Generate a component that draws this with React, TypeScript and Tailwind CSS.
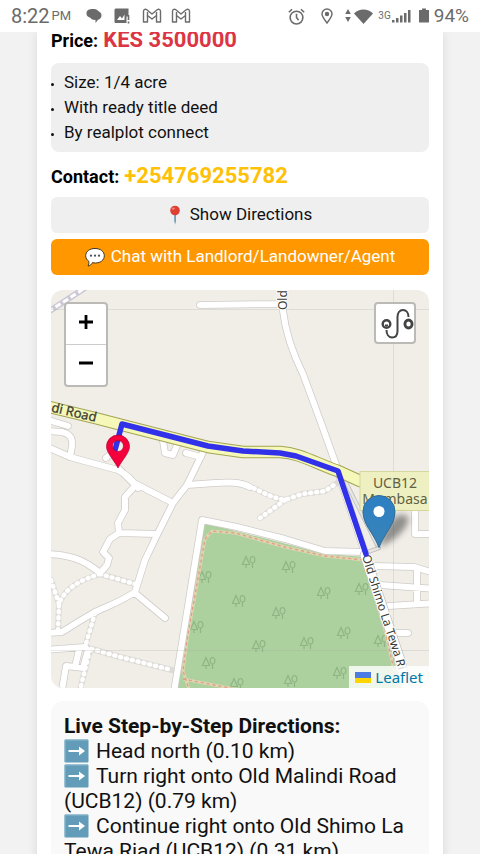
import type { ReactNode } from 'react';

function Mail() {
  return (
    <svg className="h-4 w-5" viewBox="0 0 20 16" fill="none" stroke="#6b6b6b" strokeWidth="1.4" strokeLinejoin="round">
      <path d="M1.500 14V3.200C1.500 1 3.600.8 4.800 1.800L10 6l5.200-4.200C16.400.8 18.500 1 18.500 3.200V14h-4V7.500L10 11 5.500 7.500V14z" />
      <path d="M5.500 7.500V4M14.500 7.500V4" />
    </svg>
  );
}

function StatusBar() {
  return (
    <header className="flex h-8 shrink-0 items-center justify-between bg-white px-[11px] text-[#6b6b6b]">
      <div className="flex items-center">
        <span className="text-[20px] leading-8">8:22</span>
        <span className="ml-[2px] text-[13px] leading-8">PM</span>
        <svg className="ml-[15px] h-4 w-4" viewBox="0 0 16 16" fill="#6b6b6b">
          <path d="M7 1c4 0 6 2 6 4.800C13 9 10 10 7.500 10 4 10 .5 9 .5 5.500S3 1 7 1z" />
          <path d="M9 3c4-.5 6.500 1.200 6.500 4.300 0 2.500-1.600 4-3.500 4.500L9.500 15v-3C6 12 4 10.500 4 8z" />
        </svg>
        <svg className="ml-3 h-4 w-4" viewBox="0 0 16 16">
          <path d="M1.500.5h13v8h-2v6.500h-11A1 1 0 0 1 .5 14V1.500z" fill="#6b6b6b" />
          <path d="M3 12l3-4 2 2.500 2.500-4V12z" fill="#fff" />
          <path d="M14.500 7v5M14.500 13.500v2" stroke="#6b6b6b" strokeWidth="1.600" />
        </svg>
        <span className="ml-3 flex gap-[9px]">
          <Mail />
          <Mail />
        </span>
      </div>
      <div className="flex items-center">
        <svg className="h-[17px] w-[17px]" viewBox="0 0 16 16" fill="none" stroke="#6b6b6b" strokeWidth="1.500">
          <circle cx="8" cy="9" r="6" />
          <path d="M8 5.500V9l2 2.500M.8 4l3-2.800M15.200 4l-3-2.800" />
        </svg>
        <svg className="ml-4 h-4 w-3" viewBox="0 0 12 16" fill="none" stroke="#6b6b6b" strokeWidth="1.400">
          <path d="M6 15C3 11 1 8.500 1 6a5 5 0 0 1 10 0c0 2.500-2 5-5 9z" />
          <circle cx="6" cy="6" r="1.500" fill="#6b6b6b" />
        </svg>
        <svg className="ml-3 h-4 w-7" viewBox="0 0 28 16" fill="#6b6b6b">
          <path d="M3 1l2.800 5H.2zM3 14L.2 9h5.600z" />
          <path d="M9 5.500c5-5.300 14-5.300 19 0L18.500 16z" />
        </svg>
        <span className="ml-[5px] text-[10px] leading-4">3G</span>
        <svg className="h-4 w-5" viewBox="0 0 20 16" fill="#6b6b6b">
          <path d="M1 12h2.500v2.500H1zM5 10h2.500v4.500H5zM9 7.500h2.500v7H9zM13 5h2.500v9.500H13zM17 2h2.500v12.500H17z" />
        </svg>
        <svg className="ml-2 h-4 w-[10px]" viewBox="0 0 10 16" fill="#6b6b6b">
          <path d="M3 .5h4v1.500h3v12.500H0V2h3z" />
        </svg>
        <span className="ml-[5px] text-[19px] leading-8">94%</span>
      </div>
    </header>
  );
}

function PushPin() {
  return (
    <svg className="h-5 w-[14px]" viewBox="0 0 14 20" aria-hidden="true">
      <path d="M6.200 9h1.800v7l-.9 3.500-.9-3.500z" fill="#6f9db5" />
      <circle cx="7" cy="5.500" r="4.800" fill="#dd3f34" />
      <ellipse cx="5.300" cy="3.600" rx="1.600" ry="1.200" fill="#f58073" />
    </svg>
  );
}

function SpeechBalloon() {
  return (
    <svg className="h-5 w-5" viewBox="0 0 20 20" aria-hidden="true">
      <path d="M10 1.500c5.500 0 9.300 3 9.300 7.300S15.500 16 10.500 16c-1 0-2-.1-3-.4C6.500 17.500 5 18.800 3 19c.9-1.300 1-3 .8-4.700C1.900 13 .7 11 .7 8.800.7 4.500 4.500 1.500 10 1.500z" fill="#fff" stroke="#3d3427" strokeWidth="1" />
      <g fill="#43505c">
        <circle cx="6" cy="8.700" r="1.100" />
        <circle cx="10" cy="8.700" r="1.100" />
        <circle cx="14" cy="8.700" r="1.100" />
      </g>
    </svg>
  );
}

function StepArrow() {
  return (
    <svg className="mr-[7px] inline-block h-6 w-[25px] align-[-5px]" viewBox="0 0 25 24" aria-hidden="true">
      <rect x=".5" y=".5" width="24" height="23" rx="1" fill="#629cb8" />
      <path d="M1 23V1h23" fill="none" stroke="#8dbace" />
      <path d="M4.500 12H17" stroke="#fff" strokeWidth="2" />
      <path d="M15 7.500l6 4.500-6 4.500z" fill="#fff" />
    </svg>
  );
}

const lanes = [
  'M200 305L283 304',
  'M284 286L283 311C286 335 296 360 303 374L320 420L338 470',
  'M45 419L68 426',
  'M45 431L62 432C70 434 73 438 72 446L70 457',
  'M45 446L70 457L88 462L118 470C128 475 133 481 138 488',
  'M118 468L132 482L173 503',
  'M113 452L106 458',
  'M163 441L165 453L173 455L178 443',
  'M186 453L201 457',
  'M205 448L187 485L173 503L157 535L145 560L135 592C120 602 108 606 95 612L78 622L62 632L45 633',
  'M187 485L215 483C230 482 240 482 250 487',
  'M133 488L125 497L125 510L118 523L119 533L157 534',
  'M119 533L110 539L103 552L109 558L107 565L100 573',
  'M45 554C70 554 84 560 100 573',
  'M135 593L165 618',
  'M45 650L85 647',
  'M79 650L75 667M62 690L66 666L84 668M88 650L83 668',
  'M174 692L202 520L237 527L285 539L325 551L363 552',
  'M338 472L366 556',
  'M365 555L380 600L400 660L408 692',
  'M374 566L414 567L435 573',
  'M380 585L435 589',
  'M388 606L435 603',
  'M417 568L417 604',
  'M415 505L415 534L435 534',
  'M396 633L408 633',
];

const tracks = [
  'M100 574L135 584',
  'M100 574C80 580 65 588 59 604L58 630',
  'M51 580L59 604',
  'M95 613L85 647L120 657L172 670',
  'M90 650L80 690',
  'M248 486C260 490 268 497 285 500L302 494L325 491L337 483',
  'M285 500L260 518',
];

const trees = [
  [249, 562], [289, 567], [205, 577], [239, 601], [324, 593], [362, 589], [197, 627], [279, 613],
  [344, 633], [259, 646], [307, 643], [209, 663], [381, 641], [340, 673], [291, 681], [237, 684],
];

function MapDrawing() {
  return (
    <svg className="block h-full w-full" viewBox="51 290 378 398" preserveAspectRatio="xMidYMid slice" fontFamily="'Noto Sans', sans-serif">
      <defs>
        <linearGradient id="pinBlue" x1="0" y1="0" x2="0" y2="1">
          <stop offset="0" stopColor="#2e80c4" />
          <stop offset="1" stopColor="#3883b7" />
        </linearGradient>
        <filter id="soft" x="-50%" y="-50%" width="200%" height="200%">
          <feGaussianBlur stdDeviation="3" />
        </filter>
        <path id="malindi" d="M40 409L100 423" />
        <path id="shimo" d="M362 556L377 604L396 662L406 700" />
        <g id="grove" fill="none" stroke="#8fb586" strokeWidth="1.200">
          <path d="M-3-5.500L-6.500 2.500H.5zM-3 2.500V6" />
          <path d="M3.500 6V1M3.500 1C0 1 .5-5.500 3.500-5.500S7 1 3.500 1z" />
        </g>
      </defs>
      <rect x="51" y="290" width="378" height="398" fill="#f1eee8" />
      <path d="M204 523L240 532L325 554L366 557L392 650L402 692H172z" fill="#add19e" />
      {trees.map(([x, y]) => (
        <use key={`${x}-${y}`} href="#grove" x={x} y={y} />
      ))}
      <path d="M190 692L183 671L187 640L205 539L212 531L235 533L285 547L325 556L364 560L385 630L398 688M183 679L240 690" fill="none" stroke="#dcd5b0" strokeWidth="3" />
      <path d="M190 692L183 671L187 640L205 539L212 531L235 533L285 547L325 556L364 560L385 630L398 688M183 679L240 690" fill="none" stroke="#e39a86" strokeWidth="1.300" strokeDasharray="3 3" />
      <path d="M48 312L88 286" stroke="#cdc8d6" strokeWidth="6" />
      <path d="M48 312L88 286" stroke="#fff" strokeWidth="3" strokeDasharray="6 3" />
      <g fill="none" strokeLinecap="round" strokeLinejoin="round">
        <path d={tracks.join('')} stroke="#dedbd7" strokeWidth="6" />
        <path d="M365 553L379 548M342 474L377 545" stroke="#bbb" strokeWidth="4" />
        <path d="M365 553L379 548M342 474L377 545" stroke="#e8e6e2" strokeWidth="2.500" />
        <path d={lanes.join('')} stroke="#cfcbc9" strokeWidth="7.500" />
        <path d={tracks.join('')} stroke="#fff" strokeWidth="4.500" strokeDasharray="1 5" />
        <path d={lanes.join('')} stroke="#fff" strokeWidth="6" />
        <path d="M365 555L380 600L400 660L408 692" stroke="#c4c1be" strokeWidth="10.500" />
        <path d="M365 555L380 600L400 660L408 692" stroke="#fff" strokeWidth="9" />
        <path d="M45 406L95 418L122 425L208 447L243 452L280 452C300 453 315 463 338 471L360 481L435 494" stroke="#a3a552" strokeWidth="12.500" />
        <path d="M45 406L95 418L122 425L208 447L243 452L280 452C300 453 315 463 338 471L360 481L435 494" stroke="#f5f8b8" strokeWidth="10.500" />
      </g>
      <path d="M51 309.500H429M51 650.500H429M393.500 290V688" stroke="#a8a8a0" strokeOpacity=".25" />
      <g fontSize="13" fill="#3c3c34">
        <text stroke="#3c3c34" strokeWidth=".3"><textPath href="#malindi" startOffset="11">di Road</textPath></text>
        <text fontSize="12" transform="translate(287 310) rotate(-90)" stroke="#fff" strokeWidth="2" paintOrder="stroke">Old</text>
        <text fontSize="12" stroke="#fff" strokeWidth="2" paintOrder="stroke"><textPath href="#shimo">Old Shimo La Tewa Ri</textPath></text>
      </g>
      <rect x="360" y="471.500" width="72" height="39" fill="#eff0c2" stroke="#d5d79c" />
      <g fontSize="14" fill="#5f6042" textAnchor="middle">
        <text x="395" y="488">UCB12</text>
        <text x="395" y="504">Mombasa</text>
      </g>
      <path d="M115 450L122 424L208 446L243 451L280 453L296 456L338 471L366 554" fill="none" stroke="#3131ea" strokeWidth="5.500" strokeLinecap="round" strokeLinejoin="round" />
      <path d="M379 547C385 525 395 512 405 515S402 538 379 547z" fill="#000" fillOpacity=".4" filter="url(#soft)" />
      <path fillRule="evenodd" d="M118 468C114 460 106.500 453 106.500 446.500a11.500 11.500 0 0 1 23 0C129.500 453 122 460 118 468zM118 440.500a5.500 5.500 0 1 0 0 11 5.500 5.500 0 0 0 0-11z" fill="#f4003d" stroke="#b80036" strokeWidth=".7" />
      <path d="M379 547.500C373 532 363 525 363 511.500a16 16 0 0 1 32 0C395 525 385 532 379 547.500z" fill="url(#pinBlue)" stroke="#2e6c97" />
      <circle cx="379" cy="511.500" r="5.500" fill="#fff" />
    </svg>
  );
}

function PropertyMap() {
  return (
    <section aria-label="Map" className="relative mt-[15px] h-[398px] overflow-hidden rounded-xl">
      <MapDrawing />
      <div className="absolute top-3 left-[13px] flex w-11 flex-col rounded border-2 border-[#bcbab6] bg-white">
        <button type="button" aria-label="Zoom in" className="flex h-[41px] items-center justify-center border-b border-[#ccc] pb-1">
          <svg className="h-4 w-4" viewBox="0 0 16 16"><path d="M8 1v14M1 8h14" stroke="#000" strokeWidth="2.800" /></svg>
        </button>
        <button type="button" aria-label="Zoom out" className="flex h-10 items-center justify-center pb-1">
          <svg className="h-4 w-4" viewBox="0 0 16 16"><path d="M1 8h14" stroke="#000" strokeWidth="2.800" /></svg>
        </button>
      </div>
      <button type="button" aria-label="Routing" className="absolute top-3 right-[13px] h-[42px] w-[42px] rounded border-2 border-[#bcbab6] bg-white">
        <svg className="h-full w-full" viewBox="0 0 38 38" fill="none" stroke="#444">
          <circle cx="10.500" cy="20" r="3.800" strokeWidth="2.400" />
          <path d="M9 21.500h3" strokeWidth="2" />
          <ellipse cx="32.500" cy="20" rx="3.600" ry="4" strokeWidth="2.800" />
          <path d="M10.500 26c0 4 2 7.500 5.500 7.500S21.500 31 21.500 27V13c0-4 2-7 5.500-7s5.500 3 5.500 7" strokeWidth="2" />
        </svg>
      </button>
      <p className="absolute right-0 bottom-0 flex h-[22px] items-center gap-1 bg-white/80 px-[6px] font-['Noto_Sans',sans-serif] text-[15px] text-[#0078a8]">
        <svg className="h-[11px] w-4" viewBox="0 0 16 11" aria-hidden="true">
          <path fill="#4c7be1" d="M0 0h16v6H0z" />
          <path fill="#ffd500" d="M0 6h16v5H0z" />
        </svg>
        <a href="#leaflet" className="leading-[22px]">Leaflet</a>
      </p>
    </section>
  );
}

function Step({ children }: { children: ReactNode }) {
  return (
    <li>
      <StepArrow />
      {children}
    </li>
  );
}

export default function App() {
  return (
    <div className="flex h-screen flex-col overflow-hidden bg-[#f2f2f2] font-[Roboto,sans-serif] text-black">
      <StatusBar />
      <main className="min-h-0 flex-1 overflow-hidden px-[37px]">
        <article className="bg-white px-[14px] pb-4 shadow-[0_0_10px_rgba(0,0,0,0.1)]">
          <p className="flex items-baseline gap-[5px] text-[18px] leading-4 font-bold">
            Price: <span className="text-[22px] text-[#dc3545]">KES 3500000</span>
          </p>
          <ul className="mt-[14px] list-disc rounded-lg bg-[#efefef] px-[13px] py-[7px] text-[17px] leading-[25px] text-[#111] marker:text-[10px]">
            <li>Size: 1/4 acre</li>
            <li>With ready title deed</li>
            <li>By realplot connect</li>
          </ul>
          <p className="mt-3 flex items-baseline gap-[5px] text-[18px] leading-6 font-bold">
            Contact: <span className="text-[22px] text-[#ffc107]">+254769255782</span>
          </p>
          <div className="mt-2 flex flex-col gap-[6px] text-[17px]">
            <button type="button" className="flex h-9 items-center justify-center gap-2 rounded-md bg-[#efefef] pb-px text-[#111]">
              <PushPin />
              Show Directions
            </button>
            <button type="button" className="flex h-9 items-center justify-center gap-[6px] rounded-md bg-[#ff9800] pb-px text-white">
              <SpeechBalloon />
              Chat with Landlord/Landowner/Agent
            </button>
          </div>
          <PropertyMap />
          <section className="mt-[13px] rounded-xl bg-[#f9f9f9] p-[13px] text-[21px] leading-[25px] text-[#111]">
            <h2 className="font-bold">Live Step-by-Step Directions:</h2>
            <ol>
              <Step>Head north (0.10 km)</Step>
              <Step>Turn right onto Old Malindi Road (UCB12) (0.79 km)</Step>
              <Step>Continue right onto Old Shimo La Tewa Riad (UCB12) (0.31 km)</Step>
            </ol>
          </section>
        </article>
      </main>
    </div>
  );
}
